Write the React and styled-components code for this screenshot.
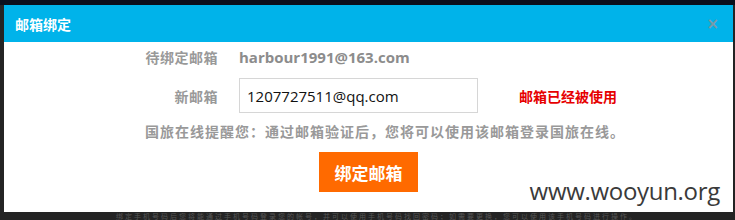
import React from 'react'
import styled, { createGlobalStyle } from 'styled-components'

const GlobalStyle = createGlobalStyle`
  html, body {
    margin: 0;
    padding: 0;
    background: #242424;
  }
  body {
    font-family: "Liberation Sans", "Noto Sans CJK SC", sans-serif;
    overflow: hidden;
  }
`

const Page = styled.div`
  position: relative;
  width: 735px;
  height: 220px;
  overflow: hidden;
  background: linear-gradient(#0b0f1c 0, #0b0f1c 5px, #242424 5px);
  padding: 5px 2px 0 4px;
  box-sizing: border-box;
`

const Dialog = styled.div`
  width: 729px;
  height: 207px;
  background: #fff;
  display: flex;
  flex-direction: column;
`

const Header = styled.div`
  height: 37px;
  background: #00b3ea;
  display: flex;
  align-items: center;
  justify-content: space-between;
  padding: 0 14px 0 11px;
`

const Title = styled.h3`
  margin: 0;
  color: #fff;
  font-size: 14px;
  font-weight: bold;
  font-family: "Noto Sans CJK SC", sans-serif;
`

const Close = styled.span`
  color: #7a9aa8;
  font-size: 15px;
  font-weight: bold;
  font-family: "DejaVu Sans", sans-serif;
`

const Body = styled.div`
  padding: 6px 0 0 0;
  display: flex;
  flex-direction: column;
`

const Row = styled.div`
  display: flex;
  align-items: center;
  margin-top: ${p => p.$top || 0}px;
`

const Label = styled.div`
  width: 235px;
  text-align: right;
  padding-right: 21px;
  box-sizing: border-box;
  font-size: 14px;
  line-height: 18px;
  letter-spacing: 0.5px;
  color: #999;
  font-weight: bold;
  font-family: "Noto Sans CJK SC", sans-serif;
`

const Value = styled.div`
  font-size: 15px;
  line-height: 18px;
  color: #8c8c8c;
  font-weight: bold;
  font-family: "Open Sans", "Noto Sans CJK SC", sans-serif;
`

const Input = styled.input`
  width: 239px;
  height: 35px;
  box-sizing: border-box;
  border: 1px solid #d6d6d6;
  padding: 0 7px;
  font-size: 15px;
  color: #111;
  font-family: "Open Sans", sans-serif;
  outline: none;
`

const Error = styled.span`
  margin-left: 41px;
  color: #e60000;
  font-size: 14px;
  font-weight: bold;
  font-family: "Noto Sans CJK SC", sans-serif;
`

const Notice = styled.p`
  margin: 9px 0 0 141px;
  font-size: 14px;
  line-height: 18px;
  letter-spacing: 1px;
  color: #999;
  font-weight: bold;
  font-family: "Noto Sans CJK SC", sans-serif;
`

const Submit = styled.button`
  align-self: center;
  margin-top: 12px;
  width: 99px;
  height: 40px;
  border: none;
  background: #ff6a00;
  color: #fff;
  font-size: 17px;
  font-weight: bold;
  font-family: "Noto Sans CJK SC", sans-serif;
  cursor: pointer;
`

const Backdrop = styled.div`
  height: 8px;
  padding-left: 112px;
  font-size: 7px;
  line-height: 8px;
  letter-spacing: 2px;
  color: #555;
  white-space: nowrap;
  font-family: "Noto Sans CJK SC", sans-serif;
`

const Watermark = styled.div`
  position: absolute;
  right: 15px;
  top: 174px;
  font-size: 24px;
  color: #3a3a3a;
  font-family: "Open Sans", sans-serif;
  letter-spacing: -0.3px;
`

export default function App() {
  return (
    <>
      <GlobalStyle />
      <Page>
        <Dialog>
          <Header>
            <Title>邮箱绑定</Title>
            <Close>×</Close>
          </Header>
          <Body>
            <Row>
              <Label>待绑定邮箱</Label>
              <Value>harbour1991@163.com</Value>
            </Row>
            <Row $top={12}>
              <Label>新邮箱</Label>
              <Input defaultValue="1207727511@qq.com" />
              <Error>邮箱已经被使用</Error>
            </Row>
            <Notice>国旅在线提醒您：通过邮箱验证后，您将可以使用该邮箱登录国旅在线。</Notice>
            <Submit>绑定邮箱</Submit>
          </Body>
        </Dialog>
        <Backdrop>
          绑定手机号码后您将能通过手机号码登录您的帐号，并可以使用手机号码找回密码；如需要更换，您可以使用该手机号码进行操作。
        </Backdrop>
        <Watermark>www.wooyun.org</Watermark>
      </Page>
    </>
  )
}
